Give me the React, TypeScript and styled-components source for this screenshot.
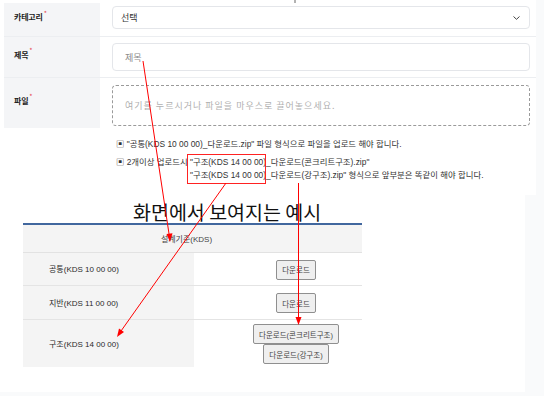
import React from 'react';
import styled, { createGlobalStyle } from 'styled-components';

const GlobalStyle = createGlobalStyle`
  html, body {
    margin: 0;
    padding: 0;
    background: #f9fafb;
  }
  body {
    font-family: "Liberation Sans", "Noto Sans CJK KR", sans-serif;
  }
  * {
    box-sizing: border-box;
  }
`;

const Page = styled.div`
  position: relative;
  width: 544px;
  height: 396px;
  overflow: hidden;
`;

const FormPanel = styled.div`
  width: 536px;
  background: #ffffff;
  padding: 3px 0 13px 4px;
`;

const Row = styled.div<{ $h: number; $last?: boolean }>`
  display: grid;
  grid-template-columns: 96px 1fr;
  height: ${({ $h }) => $h}px;
  border-bottom: ${({ $last }) => ($last ? 'none' : '1px solid #eceef1')};
`;

const Label = styled.div`
  display: flex;
  align-items: center;
  padding: 0 0 6px 10px;
  background: #f4f5f7;
  font-family: "Noto Sans CJK KR", sans-serif;
  font-size: 8px;
  font-weight: 700;
  color: #222;
  letter-spacing: -0.2px;
`;

const Required = styled.span`
  position: relative;
  top: -4px;
  margin-left: 1px;
  color: #e5484d;
  font-size: 7px;
  font-weight: 400;
`;

const Field = styled.div<{ $pt: number }>`
  padding: ${({ $pt }) => $pt}px 6px 0 12px;
`;

const Select = styled.div`
  display: flex;
  align-items: center;
  justify-content: space-between;
  height: 23px;
  padding: 0 9px 0 8px;
  border: 1px solid #e4e6ea;
  border-radius: 4px;
  font-family: "Noto Sans CJK KR", sans-serif;
  font-size: 9px;
  color: #333;
`;

const Input = styled.div`
  display: flex;
  align-items: center;
  height: 28px;
  padding: 0 12px;
  border: 1px solid #e4e6ea;
  border-radius: 4px;
  font-family: "Noto Sans CJK KR", sans-serif;
  font-size: 9px;
  color: #8a8a8a;
`;

const DropZone = styled.div`
  display: flex;
  align-items: center;
  height: 41px;
  padding: 0 12px;
  border: 1px dashed #9a9a9a;
  border-radius: 4px;
  font-family: "Noto Sans CJK KR", sans-serif;
  font-size: 9px;
  letter-spacing: 1px;
  color: #b0b0b0;
`;

const Notes = styled.div`
  margin: 10px 0 0 112px;
  font-size: 8.4px;
  color: #333;
`;

const NoteLine = styled.div`
  line-height: 12px;
  margin-bottom: 6px;
`;

const NoteGroup = styled.div`
  display: flex;
  line-height: 13px;
`;

const NoteLines = styled.div`
  display: flex;
  flex-direction: column;
`;

const ExamplePanel = styled.div`
  width: 525px;
  background: #ffffff;
  padding: 6px 0 25px 23px;
`;

const Heading = styled.h2`
  margin: 0 0 0 110px;
  height: 22px;
  line-height: 22px;
  font-family: "Noto Sans CJK KR", sans-serif;
  font-size: 19.5px;
  font-weight: 400;
  color: #111;
  white-space: nowrap;
`;

const Table = styled.table`
  width: 339px;
  border-collapse: collapse;
  table-layout: fixed;
  border-top: 2px solid #41679e;
  font-size: 8px;
  color: #333;
`;

const HeadCell = styled.th`
  height: 28px;
  padding: 0 12px 0 0;
  background: #f4f4f4;
  border-bottom: 1px solid #e2e2e2;
  font-weight: 400;
  color: #444;
  text-align: center;
`;

const BodyRow = styled.tr<{ $h: number; $last?: boolean }>`
  height: ${({ $h }) => $h}px;
  border-bottom: ${({ $last }) => ($last ? 'none' : '1px solid #e4e4e4')};
`;

const NameCell = styled.td`
  padding: 0 0 0 26px;
  background: #f4f4f4;
  color: #2a2a2a;
`;

const ActionCell = styled.td`
  padding: 0 0 0 36px;
  text-align: center;
`;

const Buttons = styled.div`
  display: flex;
  flex-direction: column;
  align-items: center;
  padding-top: 2px;
`;

const DownloadButton = styled.button`
  height: 20px;
  padding: 0 5px;
  background: #efefef;
  border: 1px solid #8f8f8f;
  border-radius: 2px;
  font-family: "Liberation Sans", "Noto Sans CJK KR", sans-serif;
  font-size: 7.5px;
  color: #444;
`;

const Overlay = styled.svg`
  position: absolute;
  left: 0;
  top: 0;
  pointer-events: none;
`;

const Chevron = () => (
  <svg width="7" height="4" viewBox="0 0 7 4">
    <path d="M0.5 0.5 L3.5 3.3 L6.5 0.5" fill="none" stroke="#444" strokeWidth="1" />
  </svg>
);

const standards = [
  { name: '공통(KDS 10 00 00)', files: ['다운로드'], h: 33 },
  { name: '지반(KDS 11 00 00)', files: ['다운로드'], h: 34 },
  { name: '구조(KDS 14 00 00)', files: ['다운로드(콘크리트구조)', '다운로드(강구조)'], h: 48 },
];

const App = () => {
  return (
    <Page>
      <GlobalStyle />
      <FormPanel>
        <Row $h={34}>
          <Label>
            카테고리<Required>*</Required>
          </Label>
          <Field $pt={3}>
            <Select>
              <span>선택</span>
              <Chevron />
            </Select>
          </Field>
        </Row>
        <Row $h={41}>
          <Label>
            제목<Required>*</Required>
          </Label>
          <Field $pt={6}>
            <Input>제목</Input>
          </Field>
        </Row>
        <Row $h={50} $last>
          <Label>
            파일<Required>*</Required>
          </Label>
          <Field $pt={7}>
            <DropZone>여기를 누르시거나 파일을 마우스로 끌어놓으세요.</DropZone>
          </Field>
        </Row>

        <Notes>
          <NoteLine>▣ "공통(KDS 10 00 00)_다운로드.zip" 파일 형식으로 파일을 업로드 해야 합니다.</NoteLine>
          <NoteGroup>
            <span>▣ 2개이상 업로드시&nbsp;</span>
            <NoteLines>
              <span>"구조(KDS 14 00 00)_다운로드(콘크리트구조).zip"</span>
              <span>"구조(KDS 14 00 00)_다운로드(강구조).zip" 형식으로 앞부분은 똑같이 해야 합니다.</span>
            </NoteLines>
          </NoteGroup>
        </Notes>
      </FormPanel>

      <ExamplePanel>
        <Heading>화면에서 보여지는 예시</Heading>
        <Table>
          <colgroup>
            <col style={{ width: 171 }} />
            <col style={{ width: 168 }} />
          </colgroup>
          <thead>
            <tr>
              <HeadCell colSpan={2}>설계기준(KDS)</HeadCell>
            </tr>
          </thead>
          <tbody>
            {standards.map((s, i) => (
              <BodyRow key={s.name} $h={s.h} $last={i === standards.length - 1}>
                <NameCell>{s.name}</NameCell>
                <ActionCell>
                  <Buttons>
                    {s.files.map((f) => (
                      <DownloadButton key={f}>{f}</DownloadButton>
                    ))}
                  </Buttons>
                </ActionCell>
              </BodyRow>
            ))}
          </tbody>
        </Table>
      </ExamplePanel>

      <Overlay width="544" height="396" viewBox="0 0 544 396">
        <line x1="295" y1="0" x2="295" y2="3" stroke="#666" strokeWidth="1" />
        <rect x="187.5" y="154.5" width="78" height="29" fill="none" stroke="#f22" strokeWidth="1" />
        <line x1="143" y1="61" x2="169.2" y2="235" stroke="#f00" strokeWidth="1" />
        <polygon points="170,242 166.5,234 172.5,233.2" fill="#f00" />
        <line x1="226" y1="183" x2="121" y2="331" stroke="#f00" strokeWidth="1" />
        <polygon points="117,337 119,328.5 124,332" fill="#f00" />
        <line x1="298.5" y1="183" x2="298.5" y2="318" stroke="#f00" strokeWidth="1" />
        <polygon points="298.5,325 295.5,317 301.5,317" fill="#f00" />
      </Overlay>
    </Page>
  );
};

export default App;
